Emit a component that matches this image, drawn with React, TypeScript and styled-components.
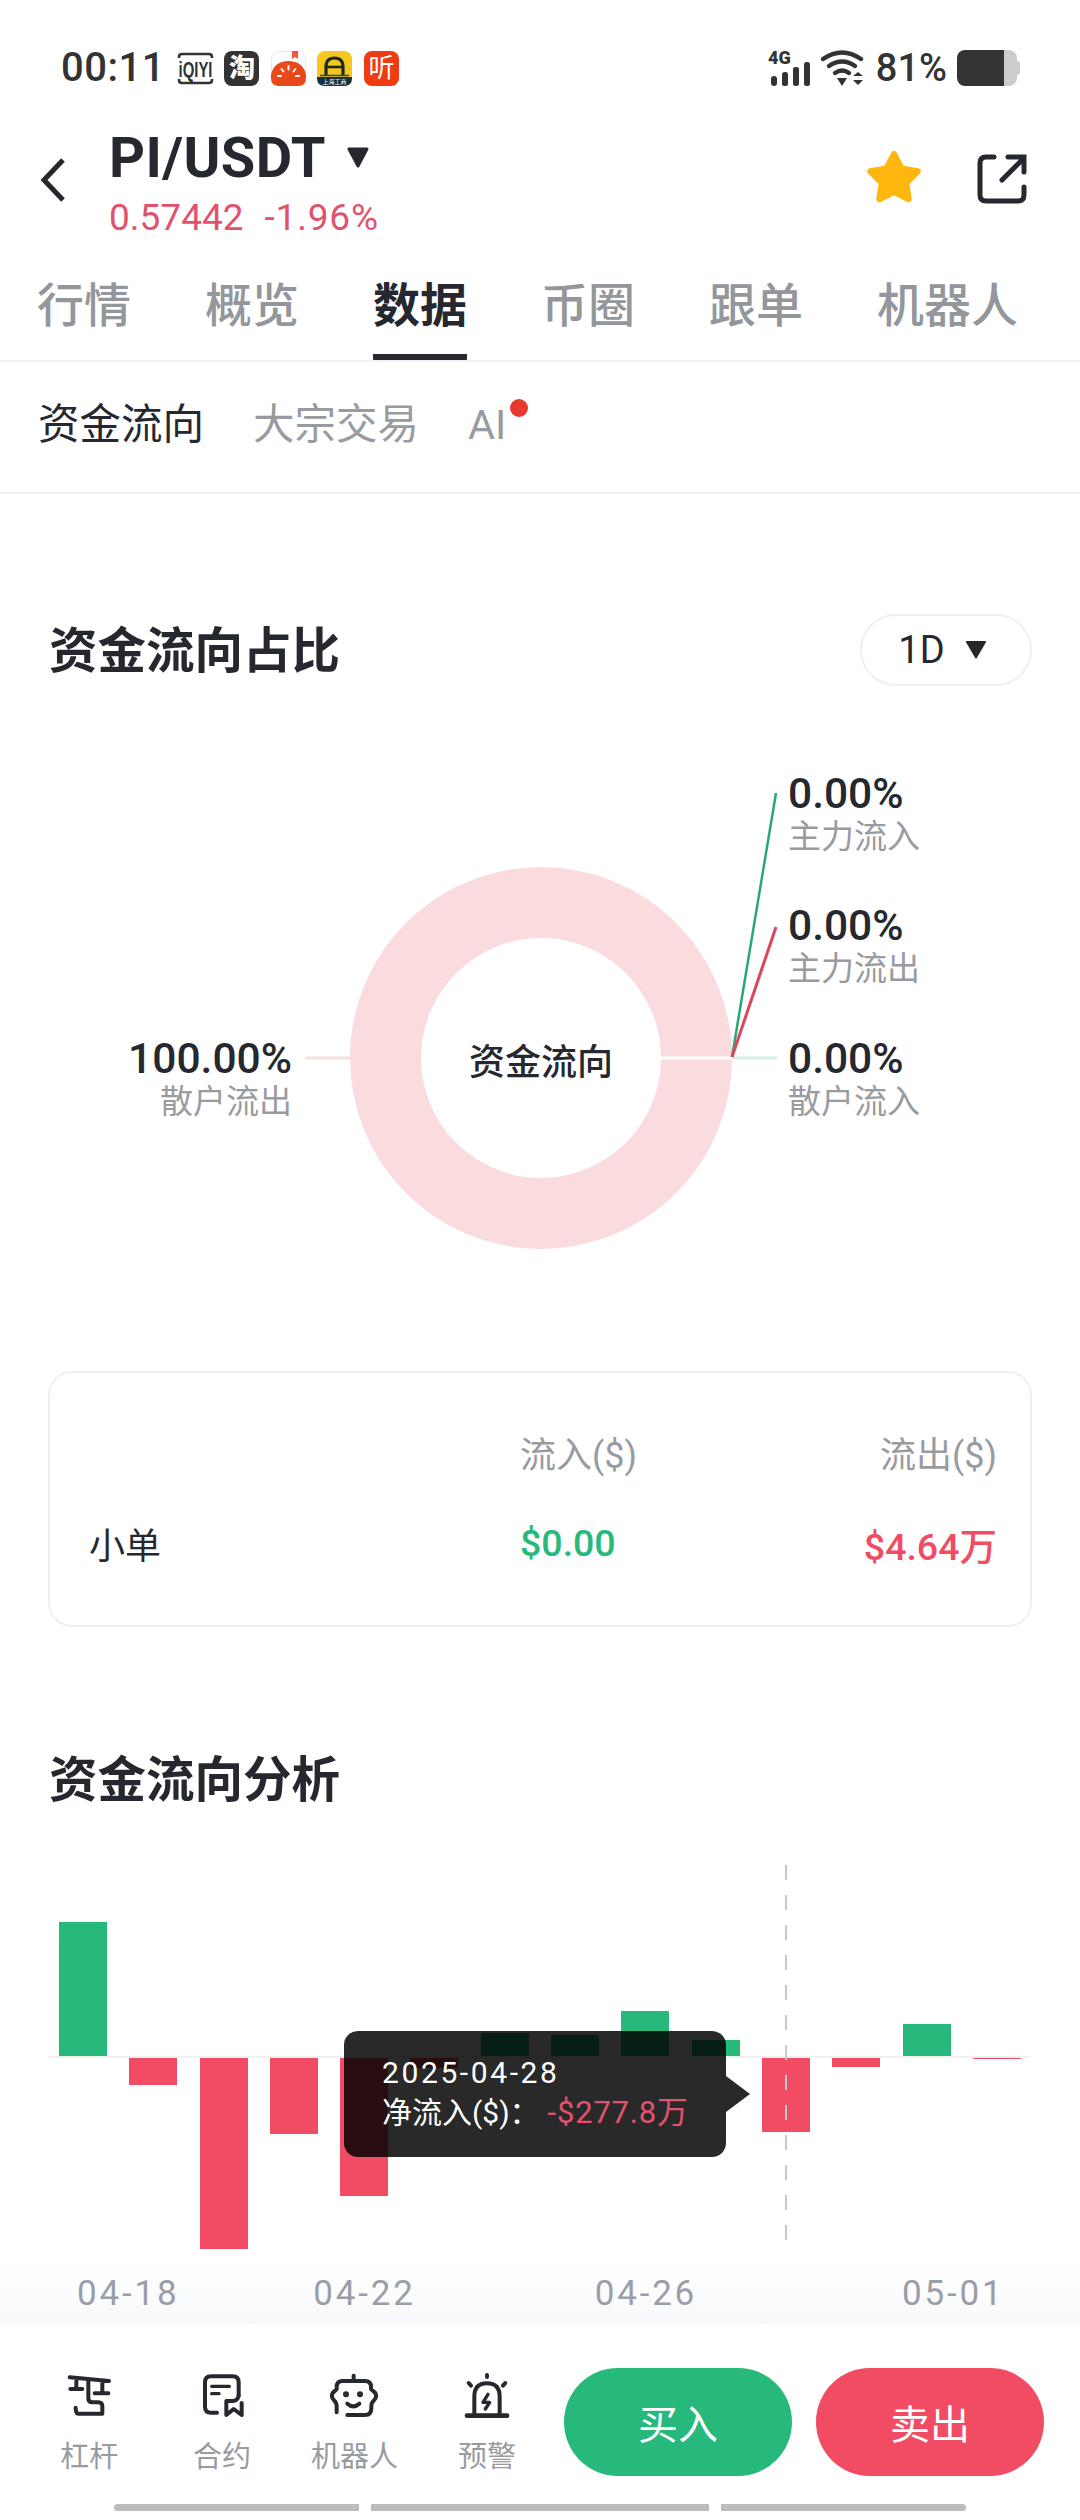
import React from 'react'
import styled, { createGlobalStyle } from 'styled-components'

const INK = '#25282f'
const GREY = '#989ba0'
const GREEN = '#27b97c'
const RED = '#f14c63'
const PRICE_RED = '#e2526d'

const GlobalStyle = createGlobalStyle`
    html, body {
        margin: 0;
        padding: 0;
        background: #fff;
    }
    body {
        font-family: Roboto, "Noto Sans CJK SC", sans-serif;
        color: ${INK};
    }
    * {
        box-sizing: border-box;
    }
`

const Page = styled.div`
    width: 1080px;
    height: 2520px;
    overflow: hidden;
    background: #fff;
    display: flex;
    flex-flow: column;
`

/* status bar */
const StatusBar = styled.div`
    height: 100px;
    padding: 50px 60px 0 61px;
    display: flex;
    justify-content: space-between;
    align-items: flex-start;
    color: #333;
`
const StatusGroup = styled.div`
    height: 36px;
    display: flex;
    align-items: center;
`
const Clock = styled.span`
    font-size: 40px;
    font-weight: 500;
    line-height: 40px;
    margin-right: 13px;
    letter-spacing: 0.5px;
`
const AppIcons = styled.div`
    display: flex;
    gap: 11.5px;
`
const AppIcon = styled.div<{ $bg: string }>`
    width: 35px;
    height: 35px;
    border-radius: 8px;
    background: ${p => p.$bg};
    color: #fff;
    overflow: hidden;
    display: flex;
    align-items: center;
    justify-content: center;
    font-size: 26px;
    line-height: 35px;
`
const BoldGlyph = styled.span`
    font-weight: 900;
`
const Battery = styled.div`
    display: flex;
    align-items: center;
    margin-left: 10px;
`
const BatteryBody = styled.div`
    width: 60px;
    height: 36px;
    border-radius: 8px;
    background: linear-gradient(90deg, #333 78%, #ccc 78%);
`
const BatteryNub = styled.div`
    width: 3px;
    height: 14px;
    border-radius: 0 3px 3px 0;
    background: #ccc;
`
const Percent = styled.span`
    font-size: 38px;
    font-weight: 500;
    line-height: 38px;
    margin-left: 11px;
`

/* pair header */
const Header = styled.div`
    height: 145px;
    padding: 27px 53px 0 40px;
    display: flex;
    align-items: flex-start;
`
const BackIcon = styled.svg`
    width: 26px;
    height: 46px;
    margin: 30px 43px 0 0;
`
const PairInfo = styled.div`
    flex: 1;
`
const PairRow = styled.div`
    display: flex;
    align-items: center;
    height: 60px;
    gap: 20px;
`
const PairName = styled.span`
    font-size: 56px;
    font-weight: 700;
    line-height: 60px;
    margin-top: 2px;
    letter-spacing: 0.4px;
    color: ${INK};
`
const PriceRow = styled.div`
    margin-top: 9px;
    font-size: 37px;
    line-height: 44px;
    color: ${PRICE_RED};
    display: flex;
    gap: 21px;
`
const PriceChange = styled.span`
    letter-spacing: 0.8px;
`
const StarIcon = styled.svg`
    width: 60px;
    height: 60px;
    margin: 21px 53px 0 0;
`
const ShareIcon = styled.svg`
    width: 50px;
    height: 50px;
    margin-top: 27px;
`

/* tabs */
const Tabs = styled.div`
    height: 117px;
    padding-left: 37px;
    display: flex;
    gap: 74px;
    border-bottom: 2px solid #f1f2f3;
`
const Tab = styled.div<{ $active?: boolean }>`
    font-size: 47px;
    height: 115px;
    padding-top: 3px;
    font-weight: ${p => (p.$active ? 700 : 500)};
    color: ${p => (p.$active ? INK : '#93969b')};
    border-bottom: 6px solid ${p => (p.$active ? INK : 'transparent')};
    display: flex;
    align-items: center;
`
const SubTabs = styled.div`
    height: 132px;
    padding: 0 0 4px 38px;
    display: flex;
    align-items: center;
    gap: 49px;
    border-bottom: 2px solid #eff0f1;
`
const SubTab = styled.div<{ $active?: boolean }>`
    position: relative;
    font-size: 41.5px;
    line-height: 50px;
    color: ${p => (p.$active ? INK : GREY)};
`
const RedDot = styled.span`
    position: absolute;
    left: 42px;
    top: -1px;
    width: 18px;
    height: 18px;
    border-radius: 50%;
    background: #e8392f;
`

/* sections */
const SectionHead = styled.div<{ $top: number }>`
    height: 72px;
    margin-top: ${p => p.$top}px;
    padding: 0 48px 0 49px;
    display: flex;
    align-items: center;
    justify-content: space-between;
`
const SectionTitle = styled.h2`
    margin: 3px 0 0;
    font-size: 48.5px;
    font-weight: 700;
    line-height: 72px;
    color: ${INK};
`
const RangePill = styled.div`
    width: 172px;
    height: 72px;
    border: 2px solid #eeeff0;
    border-radius: 36px;
    display: flex;
    align-items: center;
    justify-content: center;
    gap: 20px;
    font-size: 38px;
    padding-right: 7px;
    color: ${INK};
`
const Caret = styled.svg<{ $size: number }>`
    width: ${p => p.$size}px;
    height: ${p => p.$size * 0.875}px;
`

/* donut */
const DonutCanvas = styled.div`
    position: relative;
    height: 685px;
`
const DonutSvg = styled.svg`
    display: block;
    width: 1080px;
    height: 685px;
`
const DonutCenter = styled.div`
    position: absolute;
    left: 441px;
    top: 352px;
    width: 200px;
    text-align: center;
    font-size: 36px;
    font-weight: 500;
    line-height: 50px;
`
const Callout = styled.div<{ $x: number; $y: number; $right?: boolean }>`
    position: absolute;
    top: ${p => p.$y}px;
    ${p => (p.$right ? `right: ${1080 - p.$x}px; text-align: right;` : `left: ${p.$x}px;`)}
`
const CalloutValue = styled.div`
    font-size: 42.5px;
    font-weight: 500;
    line-height: 44px;
    color: ${INK};
`
const CalloutLabel = styled.div`
    font-size: 33px;
    line-height: 42px;
    color: ${GREY};
`

/* table card */
const FlowCard = styled.div`
    height: 256px;
    margin: 0 48px;
    padding: 33px 33px 0 39px;
    border: 2px solid #eeeff0;
    border-radius: 24px;
    display: grid;
    grid-template-columns: 431px 1fr auto;
    grid-template-rows: 92px 90px;
`
const CardCell = styled.div<{ $tone?: string; $strong?: boolean; $end?: boolean }>`
    display: flex;
    align-items: center;
    justify-content: ${p => (p.$end ? 'flex-end' : 'flex-start')};
    font-size: ${p => (p.$strong ? 37.5 : 36)}px;
    font-weight: ${p => (p.$strong ? 500 : 400)};
    color: ${p => p.$tone || INK};
`

/* bar chart */
const Chart = styled.div`
    position: relative;
    height: 384px;
    margin-top: 50px;
    padding-left: 59px;
    display: flex;
    gap: 22.3px;
`
const BarSlot = styled.div`
    width: 48px;
    display: flex;
    flex-flow: column;
`
const BarHalf = styled.div<{ $up?: boolean }>`
    height: 192px;
    display: flex;
    align-items: ${p => (p.$up ? 'flex-end' : 'flex-start')};
`
const Bar = styled.div<{ $tone: string }>`
    width: 48px;
    background: ${p => p.$tone};
`
const ZeroLine = styled.div`
    position: absolute;
    left: 48px;
    width: 983px;
    top: 191px;
    height: 2px;
    background: #f0f1f3;
`
const CrossHair = styled.div`
    position: absolute;
    left: 785px;
    top: 0;
    width: 2px;
    height: 376px;
    background: repeating-linear-gradient(180deg, #c6c9d4 0 15px, transparent 15px 30px);
`
const ChartTip = styled.div`
    position: absolute;
    left: 344px;
    top: 166px;
    width: 382px;
    height: 126px;
    padding: 22px 0 0 38px;
    border-radius: 14px;
    background: rgba(0, 0, 0, 0.84);
    color: #fff;
    font-size: 30px;
    line-height: 40px;
    &::after {
        content: '';
        position: absolute;
        left: 100%;
        top: 45px;
        border-left: 24px solid rgba(0, 0, 0, 0.84);
        border-top: 18px solid transparent;
        border-bottom: 18px solid transparent;
    }
`
const TipDate = styled.div`
    letter-spacing: 2.6px;
`
const TipRow = styled.div`
    display: flex;
    white-space: nowrap;
`
const TipValue = styled.span`
    color: ${PRICE_RED};
    margin-left: 8px;
    font-size: 31px;
    letter-spacing: 0.8px;
`
const Axis = styled.div`
    height: 75px;
    padding: 15px 0 0 77px;
    display: flex;
    background: linear-gradient(180deg, #fff 15%, #f8f9fc 100%);
`
const AxisLabel = styled.span<{ $gap?: number }>`
    font-size: 35px;
    line-height: 60px;
    height: 60px;
    letter-spacing: 2.8px;
    color: #9a9ea8;
    margin-left: ${p => p.$gap || 0}px;
`

/* footer */
const Footer = styled.div`
    flex: 1;
    padding-top: 44px;
    background: #fff;
    display: flex;
    flex-flow: column;
`
const ActionRow = styled.div`
    height: 108px;
    padding: 0 36px 0 23px;
    display: flex;
    align-items: flex-start;
`
const Tool = styled.div`
    width: 132.6px;
    display: flex;
    flex-flow: column;
    align-items: center;
`
const ToolIcon = styled.svg`
    width: 60px;
    height: 50px;
    margin-top: 2px;
    fill: none;
    stroke: ${INK};
    stroke-width: 12;
    stroke-linecap: round;
    stroke-linejoin: round;
`
const ToolLabel = styled.span`
    font-size: 29px;
    line-height: 40px;
    margin-top: 17px;
    color: ${GREY};
`
const TradeButton = styled.div<{ $tone: string; $first?: boolean }>`
    width: 228px;
    height: 108px;
    border-radius: 54px;
    background: ${p => p.$tone};
    color: #fff;
    font-size: 40px;
    display: flex;
    align-items: center;
    justify-content: center;
    margin-left: ${p => (p.$first ? 'auto' : '24px')};
`
const HomeBars = styled.div`
    margin-top: 28px;
    padding-left: 114px;
    display: flex;
    gap: 12px;
`
const HomeBar = styled.div<{ $w: number; $edge?: 'left' | 'right' }>`
    width: ${p => p.$w}px;
    height: 7px;
    background: #bdbdbd;
    border-radius: ${p => (p.$edge === 'left' ? '4px 0 0 4px' : p.$edge === 'right' ? '0 4px 4px 0' : '0')};
`

const BARS = [135, -28, -192, -77, -139, -11, 24, 22, 46, 17, -75, -10, 33, -2]

const TABS = ['行情', '概览', '数据', '币圈', '跟单', '机器人']

const IqiyiIcon = () => (
    <svg width="35" height="35" viewBox="0 0 35 35" overflow="visible">
        <path d="M1 7 V6 Q1 3 4 3 H31 Q34 3 34 6 V7 M1 28 V29 Q1 32 4 32 H31 Q34 32 34 29 V28" fill="none" stroke="#333" strokeWidth="2.6" />
        <text x="17.5" y="25.5" textAnchor="middle" fill="#333" fontFamily="Liberation Sans, sans-serif" fontWeight="700" fontSize="22" textLength="34" lengthAdjust="spacingAndGlyphs">iQIYI</text>
    </svg>
)

const TomatoIcon = () => (
    <svg width="35" height="35" viewBox="0 0 35 35">
        <rect x="0.5" y="0.5" width="34" height="34" rx="8" fill="#fff" stroke="#e8e8e8" />
        <path d="M21 0 H27 V8 L24 6 L21 8 Z" fill="#ee5a3c" />
        <path d="M0 24 C2 13 10 10 17.5 10 C25 10 33 13 35 24 V27 Q35 35 27 35 H8 Q0 35 0 27 Z" fill="#e8491a" />
        <path d="M17.5 15 V18.5 M10.5 18 L12.5 20.5 M24.5 18 L22.5 20.5 M7 25 H10 M28 25 H25" stroke="#fff" strokeWidth="2" strokeLinecap="round" />
    </svg>
)

const RoadIcon = () => (
    <svg width="35" height="35" viewBox="0 0 35 35" overflow="visible">
        <rect width="35" height="35" rx="8" fill="#f6c71c" />
        <path d="M0 26 H35 V27 Q35 35 27 35 H8 Q0 35 0 27 Z" fill="#15303a" />
        <path d="M9 24 V16 Q9 7 17.5 7 Q26 7 26 16 V24" fill="none" stroke="#1d2a22" strokeWidth="3.2" />
        <path d="M9 16 H26" stroke="#1d2a22" strokeWidth="2.6" />
        <path d="M3 24.5 H32" stroke="#3b4a2c" strokeWidth="1.6" />
        <text x="17.5" y="32.5" textAnchor="middle" fill="#fff" fontSize="6" fontFamily="Noto Sans CJK SC, sans-serif">上海工商</text>
    </svg>
)

const SignalIcon = () => (
    <svg width="42" height="36" viewBox="0 0 42 36" overflow="visible">
        <text x="0" y="14" fontFamily="Roboto, sans-serif" fontWeight="900" fontSize="18" fill="#333">4G</text>
        <g fill="#333">
            <rect x="3" y="26" width="6" height="10" rx="3" />
            <rect x="14" y="22" width="6" height="14" rx="2.5" />
            <rect x="25" y="17" width="6" height="19" rx="2.5" />
            <rect x="36" y="12" width="6" height="24" rx="2.5" />
        </g>
    </svg>
)

const WifiIcon = () => (
    <svg width="44" height="36" viewBox="0 0 44 36" style={{ marginLeft: 11 }}>
        <g fill="none" stroke="#333" strokeWidth="4.4" strokeLinecap="round">
            <path d="M2 9 Q21 -4 40 9" />
            <path d="M8 16 Q21 7 34 16" />
            <path d="M14 23 Q21 18 28 23" />
        </g>
        <path d="M16 28 H26 L21 36 Z M32 26 L37 22 L42 26 Z M32 30 H42 L37 35 Z" fill="#333" />
    </svg>
)

const Tools = [
    {
        label: '杠杆',
        box: '30 15 180 150',
        icon: (
            <>
                <path d="M62 37 L180 48 M82 48 V72 M64 72 H100 M160 50 V85 M137 85 H178 M118 45 V100 Q118 112 130 112 H148 Q160 112 160 124 V146 H88 Q80 146 80 128" />
            </>
        ),
    },
    {
        label: '合约',
        box: '423 15 180 150',
        icon: (
            <>
                <path d="M563 92 V52 Q563 34 545 34 H480 Q462 34 462 52 V125 Q462 143 480 143 H498" />
                <path d="M482 64 H535 M482 86 H504" strokeWidth="10" />
                <path d="M526 108 V150 L548 132 L572 150 V114 M526 108 H545 Q560 108 563 92" />
            </>
        ),
    },
    {
        label: '机器人',
        box: '42 15 180 150',
        icon: (
            <>
                <path d="M131 32 V46" />
                <path d="M80 142 V124 Q80 112 72 106 Q62 96 68 84 Q74 78 80 72 V66 Q80 48 98 48 H165 Q183 48 183 66 V72 Q190 78 196 84 Q202 96 192 106 Q184 112 184 124 V130 Q184 150 165 150 H112" />
                <path d="M112 116 Q130 132 148 116" />
                <circle cx="108" cy="88" r="5" strokeWidth="8" />
                <circle cx="150" cy="88" r="5" strokeWidth="8" />
            </>
        ),
    },
    {
        label: '预警',
        box: '438 15 180 150',
        icon: (
            <>
                <path d="M468 152 H588" strokeWidth="14" />
                <path d="M490 150 V95 Q490 55 528 55 Q566 55 566 95 V150" />
                <path d="M528 30 V36 M473 54 L480 62 M583 54 L576 62" />
                <path d="M531 88 L516 112 H536 L523 132" strokeWidth="10" />
            </>
        ),
    },
]

const Pct = ({ x, y, value, label, right }: { x: number; y: number; value: string; label: string; right?: boolean }) => (
    <Callout $x={x} $y={y} $right={right}>
        <CalloutValue>{value}</CalloutValue>
        <CalloutLabel>{label}</CalloutLabel>
    </Callout>
)

const App = () => (
    <Page>
        <GlobalStyle />
        <StatusBar>
            <StatusGroup>
                <Clock>00:11</Clock>
                <AppIcons>
                    <IqiyiIcon />
                    <AppIcon $bg="#333"><BoldGlyph>淘</BoldGlyph></AppIcon>
                    <TomatoIcon />
                    <RoadIcon />
                    <AppIcon $bg="#ee3b12">听</AppIcon>
                </AppIcons>
            </StatusGroup>
            <StatusGroup>
                <SignalIcon />
                <WifiIcon />
                <Percent>81%</Percent>
                <Battery>
                    <BatteryBody />
                    <BatteryNub />
                </Battery>
            </StatusGroup>
        </StatusBar>

        <Header>
            <BackIcon viewBox="0 0 26 46">
                <path d="M23 3 L4 23 L23 43" fill="none" stroke={INK} strokeWidth="5" />
            </BackIcon>
            <PairInfo>
                <PairRow>
                    <PairName>PI/USDT</PairName>
                    <Caret $size={24} viewBox="0 0 24 21">
                        <path d="M3 2 H21 L12 19 Z" fill={INK} stroke={INK} strokeWidth="3" strokeLinejoin="round" />
                    </Caret>
                </PairRow>
                <PriceRow>
                    <span>0.57442</span>
                    <PriceChange>-1.96%</PriceChange>
                </PriceRow>
            </PairInfo>
            <StarIcon viewBox="0 0 60 60">
                <polygon
                    points="30,6 37.6,20.5 53.8,23.3 42.3,35 44.7,51.2 30,44 15.3,51.2 17.7,35 6.2,23.3 22.4,20.5"
                    fill="#ffb70f"
                    stroke="#ffb70f"
                    strokeWidth="6"
                    strokeLinejoin="round"
                />
            </StarIcon>
            <ShareIcon viewBox="0 0 50 50">
                <g fill="none" stroke={INK} strokeWidth="5" strokeLinecap="round">
                    <path d="M17 3 H9 Q3 3 3 9 V41 Q3 47 9 47 H41 Q47 47 47 41 V33" />
                    <path d="M25 26 L46 5 M31 3 H47 V18" />
                </g>
            </ShareIcon>
        </Header>

        <Tabs>
            {TABS.map(t => (
                <Tab key={t} $active={t === '数据'}>{t}</Tab>
            ))}
        </Tabs>
        <SubTabs>
            <SubTab $active>资金流向</SubTab>
            <SubTab>大宗交易</SubTab>
            <SubTab>AI<RedDot /></SubTab>
        </SubTabs>

        <SectionHead $top={120}>
            <SectionTitle>资金流向占比</SectionTitle>
            <RangePill>
                1D
                <Caret $size={22} viewBox="0 0 24 21">
                    <path d="M2 2 H22 L12 19 Z" fill={INK} stroke={INK} strokeWidth="2" strokeLinejoin="round" />
                </Caret>
            </RangePill>
        </SectionHead>

        <DonutCanvas>
            <DonutSvg viewBox="0 686 1080 685">
                <circle cx="541" cy="1058" r="155.5" fill="none" stroke="#fbdcde" strokeWidth="71" />
                <path d="M660 1058 H732" stroke="#fff" strokeWidth="3" />
                <path d="M305 1058 H350" stroke="#fadfe1" strokeWidth="3" />
                <path d="M733 1058 H777" stroke="#d4f1e6" strokeWidth="3" />
                <path d="M732 1057 L776 793" stroke="#27a877" strokeWidth="2.5" fill="none" />
                <path d="M732 1057 L776 927" stroke="#dc4560" strokeWidth="3" fill="none" />
            </DonutSvg>
            <DonutCenter>资金流向</DonutCenter>
            <Pct x={788} y={86} value="0.00%" label="主力流入" />
            <Pct x={788} y={218} value="0.00%" label="主力流出" />
            <Pct x={788} y={351} value="0.00%" label="散户流入" />
            <Pct x={292} y={351} value="100.00%" label="散户流出" right />
        </DonutCanvas>

        <FlowCard>
            <CardCell />
            <CardCell $tone={GREY}>流入($)</CardCell>
            <CardCell $end $tone={GREY}>流出($)</CardCell>
            <CardCell>小单</CardCell>
            <CardCell $strong $tone={GREEN}>$0.00</CardCell>
            <CardCell $strong $end $tone={RED}>$4.64万</CardCell>
        </FlowCard>

        <SectionHead $top={116}>
            <SectionTitle>资金流向分析</SectionTitle>
        </SectionHead>

        <Chart>
            {BARS.map((v, i) => (
                <BarSlot key={i}>
                    <BarHalf $up>{v > 0 && <Bar $tone={GREEN} style={{ height: v }} />}</BarHalf>
                    <BarHalf>{v < 0 && <Bar $tone={RED} style={{ height: -v }} />}</BarHalf>
                </BarSlot>
            ))}
            <ZeroLine />
            <CrossHair />
            <ChartTip>
                <TipDate>2025-04-28</TipDate>
                <TipRow>
                    净流入($)：
                    <TipValue>-$277.8万</TipValue>
                </TipRow>
            </ChartTip>
        </Chart>
        <Axis>
            <AxisLabel>04-18</AxisLabel>
            <AxisLabel $gap={134}>04-22</AxisLabel>
            <AxisLabel $gap={179}>04-26</AxisLabel>
            <AxisLabel $gap={205}>05-01</AxisLabel>
        </Axis>

        <Footer>
            <ActionRow>
                {Tools.map(t => (
                    <Tool key={t.label}>
                        <ToolIcon viewBox={t.box}>{t.icon}</ToolIcon>
                        <ToolLabel>{t.label}</ToolLabel>
                    </Tool>
                ))}
                <TradeButton $tone={GREEN} $first>买入</TradeButton>
                <TradeButton $tone={RED}>卖出</TradeButton>
            </ActionRow>
            <HomeBars>
                <HomeBar $w={245} $edge="left" />
                <HomeBar $w={338} />
                <HomeBar $w={245} $edge="right" />
            </HomeBars>
        </Footer>
    </Page>
)

export default App
